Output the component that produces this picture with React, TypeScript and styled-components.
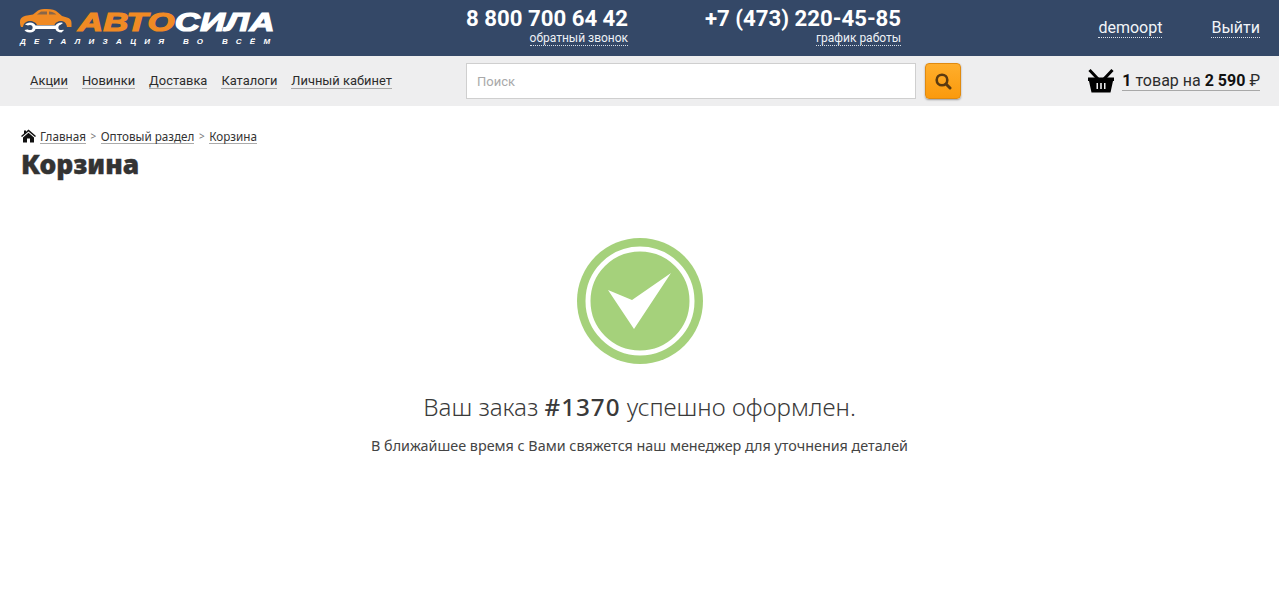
import { createGlobalStyle } from "styled-components";
import styled from "styled-components";

const GlobalStyle = createGlobalStyle`
  html, body {
    margin: 0;
    padding: 0;
    background: #fff;
    font-family: Roboto, "Liberation Sans", sans-serif;
  }
  * {
    box-sizing: border-box;
  }
`;

const TopBar = styled.header`
  display: flex;
  height: 56px;
  padding: 0 19px 0 20px;
  background: #344867;
  color: #fff;
`;

const LogoColumn = styled.a`
  display: flex;
  flex-direction: column;
  flex: 0 0 446px;
  padding-top: 9px;
`;

const LogoRow = styled.div`
  display: flex;
  align-items: flex-start;
  height: 28px;
`;

const Wordmark = styled.div`
  margin: 0 0 0 6px;
  font: italic 700 26px/26px "Liberation Sans", sans-serif;
  -webkit-text-stroke: 1.2px currentColor;
  letter-spacing: 0.2px;
  white-space: nowrap;
  transform-origin: left top;
  transform: scaleX(1.335);
`;

const WordPart = styled.span<{ $orange?: boolean }>`
  color: ${({ $orange }) => ($orange ? "#f08a24" : "#fff")};
`;

const Tagline = styled.div`
  font: italic 700 8px/9px "Liberation Sans", sans-serif;
  letter-spacing: 8.3px;
  white-space: nowrap;
`;

const PhoneBlock = styled.div<{ $width: number }>`
  display: flex;
  flex-direction: column;
  align-items: flex-end;
  flex: 0 0 ${({ $width }) => $width}px;
  padding-top: 5px;
  margin-right: 73px;
`;

const Phone = styled.div`
  font-size: 22.2px;
  font-weight: 700;
  line-height: 27px;
  white-space: nowrap;
`;

const PhoneNote = styled.a`
  font-size: 12px;
  line-height: 13px;
  border-bottom: 1px dotted #d8e0ea;
  color: #eef2f6;
`;

const UserLinks = styled.div`
  display: flex;
  align-items: flex-start;
  gap: 49px;
  margin-left: auto;
  padding-top: 19px;
`;

const UserLink = styled.a`
  font-size: 16px;
  line-height: 18px;
  border-bottom: 1px dotted #d8e0ea;
  color: #f2f5f8;
`;

const SubBar = styled.div`
  display: flex;
  align-items: center;
  height: 50px;
  padding: 0 19px 0 30px;
  background: #eeeeef;
`;

const Nav = styled.nav`
  display: flex;
  gap: 14px;
  flex: 0 0 436px;
`;

const NavLink = styled.a`
  font-size: 12.9px;
  line-height: 15px;
  color: #2c2c2c;
  border-bottom: 1px solid #a8a8a8;
`;

const SearchForm = styled.form`
  display: flex;
  gap: 9px;
`;

const SearchInput = styled.input`
  width: 450px;
  height: 36px;
  padding: 0 10px;
  border: 1px solid #cfcfcf;
  background: #fff;
  font: 13px Roboto, sans-serif;
  outline: none;
  &::placeholder {
    color: #a9a9a9;
    opacity: 1;
  }
`;

const SearchButton = styled.button`
  display: flex;
  align-items: center;
  justify-content: center;
  width: 36px;
  height: 36px;
  padding: 0;
  border: 1px solid #e08a10;
  border-radius: 4px;
  background: linear-gradient(#ffae2c, #fb9a0d);
  box-shadow: 0 1px 2px rgba(0, 0, 0, 0.35);
`;

const Cart = styled.a`
  display: flex;
  align-items: center;
  gap: 8px;
  margin-left: auto;
`;

const CartText = styled.span`
  font-size: 16px;
  line-height: 18px;
  color: #2c2c2c;
  border-bottom: 1px solid #a8a8a8;
  white-space: nowrap;
  b {
    color: #111;
    font-weight: 700;
  }
`;

const Content = styled.main`
  padding: 22px 20px 0;
`;

const Crumbs = styled.div`
  display: flex;
  align-items: center;
  height: 16px;
  font: 11.7px/14px "Noto Sans", sans-serif;
  color: #333;
`;

const Crumb = styled.a`
  border-bottom: 1px solid #aaa;
  color: #333;
`;

const CrumbSep = styled.span`
  margin: 0 4.5px;
  color: #777;
  font-size: 10px;
`;

const Title = styled.h1`
  margin: 3px 0 0 1px;
  font: 900 26.5px/34px "Noto Sans", sans-serif;
  -webkit-text-stroke: 0.4px currentColor;
  color: #333;
`;

const Success = styled.section`
  display: flex;
  flex-direction: column;
  align-items: center;
  padding-top: 57px;
`;

const Message = styled.p`
  margin: 25px 0 0;
  font: 300 24.2px/36px "Noto Sans", sans-serif;
  color: #3a3a3a;
  b {
    font-weight: 500;
    letter-spacing: 1px;
  }
`;

const Note = styled.p`
  margin: 11px 0 0;
  font: 14.35px/20px "Noto Sans", sans-serif;
  color: #444;
`;

const CarLogo = () => (
  <svg width="52" height="24" viewBox="0 0 52 24">
    <path
      fill="#f08a24"
      d="M0 13C0 9 3 7 7 6.5L13 5.5 18 1.5C20 .3 23 0 27 0 32 0 35 .8 38 3.5L42 7 47 8.5C50 9.5 51.500 11 51.500 14V18H47C46.500 14 44 12 41 12S35 14 34.500 16H17C16.500 14 13 12 10 12 6 12 3.500 14.500 3 18H1C.3 16 0 15 0 13Z"
    />
    <path fill="#344867" d="M21 2.500H27V5.500H17ZM29 2.500C32 2.500 34 3.500 36.500 5.500H29Z" opacity="0.55" />
    <path
      fill="#fff"
      d="M10 13.500C13 13.500 15 15 15.500 16.500H35.500C36 15 38.500 13.500 41.500 13.500L43 14 39.500 16.500V19.500L44 21 41.500 23.500C38.500 23.500 36 22 35.500 20H15.500C15 22 13 23.500 10 23.500 6.500 23.500 4.500 21.500 4.500 21L9.500 20V17L5 15.500C6 14.500 8 13.500 10 13.500Z"
    />
    <circle cx="10" cy="18.500" r="2.600" fill="#344867" />
    <circle cx="41" cy="18.500" r="2.600" fill="#344867" />
  </svg>
);

const BasketIcon = () => (
  <svg width="26" height="24" viewBox="0 0 26 24">
    <path stroke="#000" strokeWidth="3" d="M1.500 1 10 10M24.500 1 16 10" />
    <path fill="#000" fillRule="evenodd" d="M0 8.500H26V12H25L22.500 23.500H3.500L1 12H0ZM8.500 14V20H10V14ZM12.200 14V20H13.800V14ZM16 14V20H17.500V14Z" />
  </svg>
);

const HomeIcon = () => (
  <svg width="15" height="14" viewBox="0 0 15 13" style={{ marginRight: 4, marginLeft: 1 }}>
    <path fill="#111" d="M7.500 0 15 6.500 14 7.600 7.500 2 1 7.600 0 6.500 3 3.900V1H5V2.200ZM7.500 3.200 13 8V13H9V9H6V13H2V8Z" />
  </svg>
);

const SearchIcon = () => (
  <svg width="18" height="18" viewBox="0 0 18 18" fill="none">
    <circle cx="8" cy="8" r="5.300" stroke="#5b3a10" strokeWidth="2.600" />
    <path d="M12 12 16 16" stroke="#5b3a10" strokeWidth="3" strokeLinecap="round" />
  </svg>
);

const CheckBadge = () => (
  <svg width="126" height="126" viewBox="0 0 126 126">
    <circle cx="63" cy="63" r="63" fill="#a5d17b" />
    <circle cx="63" cy="63" r="52" fill="none" stroke="#fff" strokeWidth="5" />
    <path fill="#fff" d="M31 52 55 62 94 35 57 91Z" />
  </svg>
);

export default function App() {
  return (
    <>
      <GlobalStyle />
      <TopBar>
        <LogoColumn>
          <LogoRow>
            <CarLogo />
            <Wordmark>
              <WordPart $orange>АВТО</WordPart>
              <WordPart>СИЛА</WordPart>
            </Wordmark>
          </LogoRow>
          <Tagline>ДЕТАЛИЗАЦИЯ ВО ВСЁМ</Tagline>
        </LogoColumn>
        <PhoneBlock $width={162}>
          <Phone>8 800 700 64 42</Phone>
          <PhoneNote>обратный звонок</PhoneNote>
        </PhoneBlock>
        <PhoneBlock $width={200}>
          <Phone>+7 (473) 220-45-85</Phone>
          <PhoneNote>график работы</PhoneNote>
        </PhoneBlock>
        <UserLinks>
          <UserLink>demoopt</UserLink>
          <UserLink>Выйти</UserLink>
        </UserLinks>
      </TopBar>
      <SubBar>
        <Nav>
          <NavLink>Акции</NavLink>
          <NavLink>Новинки</NavLink>
          <NavLink>Доставка</NavLink>
          <NavLink>Каталоги</NavLink>
          <NavLink>Личный кабинет</NavLink>
        </Nav>
        <SearchForm>
          <SearchInput placeholder="Поиск" />
          <SearchButton type="button">
            <SearchIcon />
          </SearchButton>
        </SearchForm>
        <Cart>
          <BasketIcon />
          <CartText>
            <b>1</b> товар на <b>2 590</b> ₽
          </CartText>
        </Cart>
      </SubBar>
      <Content>
        <Crumbs>
          <HomeIcon />
          <Crumb>Главная</Crumb>
          <CrumbSep>&gt;</CrumbSep>
          <Crumb>Оптовый раздел</Crumb>
          <CrumbSep>&gt;</CrumbSep>
          <Crumb>Корзина</Crumb>
        </Crumbs>
        <Title>Корзина</Title>
        <Success>
          <CheckBadge />
          <Message>
            Ваш заказ <b>#1370</b> успешно оформлен.
          </Message>
          <Note>В ближайшее время с Вами свяжется наш менеджер для уточнения деталей</Note>
        </Success>
      </Content>
    </>
  );
}
